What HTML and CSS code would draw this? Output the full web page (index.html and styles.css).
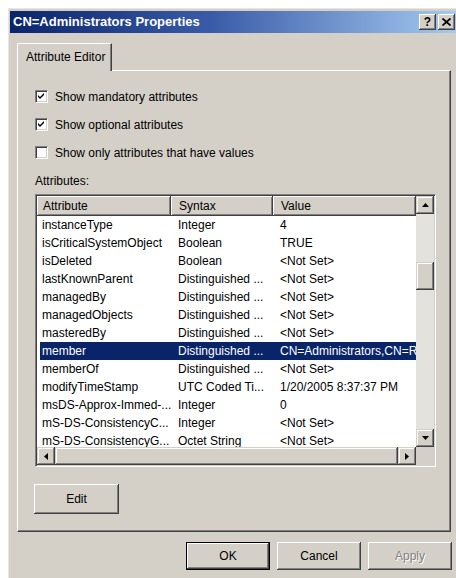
FILE: index.html
```html
<!DOCTYPE html>
<html>
<head>
<meta charset="utf-8">
<title>CN=Administrators Properties</title>
<link rel="stylesheet" href="styles.css">
</head>
<body>
<div class="window">
  <div class="titlebar">
    <span class="title">CN=Administrators Properties</span>
    <div class="caption-buttons">
      <span class="cap-btn help">?</span>
      <span class="cap-btn close">
        <svg width="9" height="8" viewBox="0 0 9 8"><path d="M0.5 0.5 L8.5 7.5 M8.5 0.5 L0.5 7.5" stroke="#000" stroke-width="1.8" fill="none"/></svg>
      </span>
    </div>
  </div>

  <div class="client">
    <div class="tabs">
      <div class="tab">Attribute Editor</div>
    </div>

    <div class="panel">
      <div class="check-row">
        <span class="checkbox"><svg width="7" height="7" viewBox="0 0 7 7"><path d="M0 2 L2 4 L6 0 L6 2 L2 6 L0 4 Z" fill="#000"/></svg></span>
        <span>Show mandatory attributes</span>
      </div>
      <div class="check-row">
        <span class="checkbox"><svg width="7" height="7" viewBox="0 0 7 7"><path d="M0 2 L2 4 L6 0 L6 2 L2 6 L0 4 Z" fill="#000"/></svg></span>
        <span>Show optional attributes</span>
      </div>
      <div class="check-row">
        <span class="checkbox"></span>
        <span>Show only attributes that have values</span>
      </div>

      <div class="list-caption">Attributes:</div>

      <div class="listview">
        <div class="lv-main">
          <div class="lv-header">
            <div class="hcell">Attribute</div>
            <div class="hcell">Syntax</div>
            <div class="hcell">Value</div>
          </div>
          <div class="lv-rows">
            <div class="row"><span>instanceType</span><span>Integer</span><span>4</span></div>
            <div class="row"><span>isCriticalSystemObject</span><span>Boolean</span><span>TRUE</span></div>
            <div class="row"><span>isDeleted</span><span>Boolean</span><span>&lt;Not Set&gt;</span></div>
            <div class="row"><span>lastKnownParent</span><span>Distinguished ...</span><span>&lt;Not Set&gt;</span></div>
            <div class="row"><span>managedBy</span><span>Distinguished ...</span><span>&lt;Not Set&gt;</span></div>
            <div class="row"><span>managedObjects</span><span>Distinguished ...</span><span>&lt;Not Set&gt;</span></div>
            <div class="row"><span>masteredBy</span><span>Distinguished ...</span><span>&lt;Not Set&gt;</span></div>
            <div class="row selected"><span>member</span><span>Distinguished ...</span><span>CN=Administrators,CN=Roles</span></div>
            <div class="row"><span>memberOf</span><span>Distinguished ...</span><span>&lt;Not Set&gt;</span></div>
            <div class="row"><span>modifyTimeStamp</span><span>UTC Coded Ti...</span><span>1/20/2005 8:37:37 PM</span></div>
            <div class="row"><span>msDS-Approx-Immed-...</span><span>Integer</span><span>0</span></div>
            <div class="row"><span>mS-DS-ConsistencyC...</span><span>Integer</span><span>&lt;Not Set&gt;</span></div>
            <div class="row"><span>mS-DS-ConsistencyG...</span><span>Octet String</span><span>&lt;Not Set&gt;</span></div>
          </div>
        </div>

        <div class="vscroll">
          <div class="sb-btn"><svg width="7" height="4" viewBox="0 0 7 4"><path d="M3.5 0 L7 4 L0 4 Z" fill="#000"/></svg></div>
          <div class="sb-track vtrack">
            <div class="thumb vthumb"></div>
          </div>
          <div class="sb-btn"><svg width="7" height="4" viewBox="0 0 7 4"><path d="M0 0 L7 0 L3.5 4 Z" fill="#000"/></svg></div>
        </div>

        <div class="hscroll">
          <div class="sb-btn"><svg width="4" height="7" viewBox="0 0 4 7"><path d="M0 3.5 L4 0 L4 7 Z" fill="#000"/></svg></div>
          <div class="sb-track htrack">
            <div class="thumb hthumb"></div>
          </div>
          <div class="sb-btn"><svg width="4" height="7" viewBox="0 0 4 7"><path d="M0 0 L4 3.5 L0 7 Z" fill="#000"/></svg></div>
        </div>

        <div class="corner"></div>
      </div>

      <div class="edit-row">
        <button class="btn edit">Edit</button>
      </div>
    </div>

    <div class="dialog-buttons">
      <button class="btn default">OK</button>
      <button class="btn">Cancel</button>
      <button class="btn disabled">Apply</button>
    </div>
  </div>
</div>
</body>
</html>
```

FILE: styles.css
```css
* {
  box-sizing: border-box;
}

html,
body {
  margin: 0;
}

body {
  width: 456px;
  height: 578px;
  overflow: hidden;
  background: #ffffff;
  font-family: "Liberation Sans", Arial, sans-serif;
  font-size: 12px;
  color: #000;
}

/* dialog frame */
.window {
  margin: 8px 0 0 8px;
  width: 452px;
  height: 580px;
  padding: 3px 2px 0 2px;
  background: #d4d0c8;
  box-shadow: inset 1px 1px #e8e6e2;
}

.titlebar {
  height: 22px;
  display: flex;
  align-items: center;
  justify-content: space-between;
  padding: 0 3px 0 3px;
  background: linear-gradient(to right, #0a246a 0%, #3a5ca8 45%, #a6caf0 100%);
}

.title {
  color: #fff;
  font-weight: bold;
  font-size: 13px;
  line-height: 22px;
  white-space: nowrap;
}

.caption-buttons {
  display: flex;
  gap: 2px;
}

.cap-btn {
  width: 17px;
  height: 16px;
  display: flex;
  align-items: center;
  justify-content: center;
  background: #d4d0c8;
  box-shadow: inset -1px -1px #404040, inset 1px 1px #fff, inset -2px -2px #808080;
  font-weight: bold;
  font-size: 12px;
  line-height: 16px;
}

.client {
  padding: 10px 7px 0 7px;
}

/* tab strip */
.tabs {
  height: 27px;
  display: flex;
  align-items: flex-end;
}

.tab {
  position: relative;
  z-index: 1;
  width: 95px;
  height: 28px;
  margin-bottom: -1px;
  padding: 6px 0 0 8px;
  line-height: 15px;
  background: #d4d0c8;
  border-top: 1px solid #fff;
  border-left: 1px solid #fff;
  border-right: 1px solid #404040;
  border-top-left-radius: 2px;
  box-shadow: inset -1px 0 #808080;
}

.panel {
  height: 462px;
  padding: 19px 0 0 17px;
  border-top: 1px solid #fff;
  border-left: 1px solid #fff;
  border-right: 1px solid #404040;
  border-bottom: 1px solid #404040;
  box-shadow: inset -1px -1px #808080;
}

.check-row {
  height: 13px;
  margin-bottom: 15px;
  display: flex;
  align-items: center;
  gap: 7px;
  line-height: 14px;
  white-space: nowrap;
}

.checkbox {
  width: 13px;
  height: 13px;
  flex: none;
  display: flex;
  align-items: center;
  justify-content: center;
  background: #fff;
  border-top: 1px solid #808080;
  border-left: 1px solid #808080;
  border-right: 1px solid #fff;
  border-bottom: 1px solid #fff;
  box-shadow: inset 1px 1px #404040, inset -1px -1px #d4d0c8;
}

.list-caption {
  line-height: 14px;
  margin-bottom: 6px;
}

/* attribute list */
.listview {
  width: 401px;
  height: 273px;
  display: grid;
  grid-template-columns: 379px 18px;
  grid-template-rows: 251px 18px;
  border-top: 1px solid #808080;
  border-left: 1px solid #808080;
  border-right: 1px solid #fff;
  border-bottom: 1px solid #fff;
  box-shadow: inset 1px 1px #404040, inset -1px -1px #d4d0c8;
  padding: 1px;
  background: #fff;
}

.lv-main {
  overflow: hidden;
  background: #fff;
}

.lv-header {
  height: 20px;
  display: grid;
  grid-template-columns: 134px 102px 143px;
}

.hcell {
  line-height: 20px;
  padding-left: 6px;
  background: #d4d0c8;
  box-shadow: inset -1px -1px #404040, inset 1px 1px #fff, inset -2px -2px #808080;
  white-space: nowrap;
  overflow: hidden;
}

.hcell + .hcell {
  padding-left: 8px;
}

.lv-rows {
  height: 231px;
  overflow: hidden;
  padding-left: 3px;
}

.row {
  height: 18px;
  display: grid;
  grid-template-columns: 131px 102px 143px;
  line-height: 18px;
  white-space: nowrap;
}

.row span {
  overflow: hidden;
  padding-left: 2px;
}

.row span + span {
  padding-left: 7px;
}

.row.selected {
  background: #0a246a;
  color: #fff;
}

.vscroll {
  display: flex;
  flex-direction: column;
}

.hscroll {
  display: flex;
}

.sb-btn {
  width: 18px;
  height: 18px;
  flex: none;
  display: flex;
  align-items: center;
  justify-content: center;
  background: #d4d0c8;
  box-shadow: inset -1px -1px #404040, inset 1px 1px #d4d0c8, inset -2px -2px #808080, inset 2px 2px #fff;
}

.sb-track {
  flex: 1;
  background: #e4e2dc;
}

.vtrack {
  padding-top: 48px;
}

.vthumb {
  height: 28px;
}

.htrack {
  display: flex;
}

.hthumb {
  flex: 1;
}

.thumb {
  background: #d4d0c8;
  box-shadow: inset -1px -1px #404040, inset 1px 1px #d4d0c8, inset -2px -2px #808080, inset 2px 2px #fff;
}

.corner {
  background: #d4d0c8;
}

/* push buttons */
.btn {
  font-family: "Liberation Sans", Arial, sans-serif;
  font-size: 12px;
  color: #000;
  background: #d4d0c8;
  border: none;
  padding: 0;
  margin: 0;
  box-shadow: inset -1px -1px #404040, inset 1px 1px #fff, inset -2px -2px #808080;
}

.edit-row {
  margin-top: 17px;
}

.btn.edit {
  width: 85px;
  height: 30px;
  margin-left: -1px;
}

.dialog-buttons {
  margin-top: 10px;
  margin-right: -1px;
  display: flex;
  justify-content: flex-end;
  gap: 7px;
}

.dialog-buttons .btn {
  width: 84px;
  height: 28px;
}

.btn.default {
  border: 1px solid #000;
}

.btn.disabled {
  color: #808080;
  text-shadow: 1px 1px #fff;
}
```
